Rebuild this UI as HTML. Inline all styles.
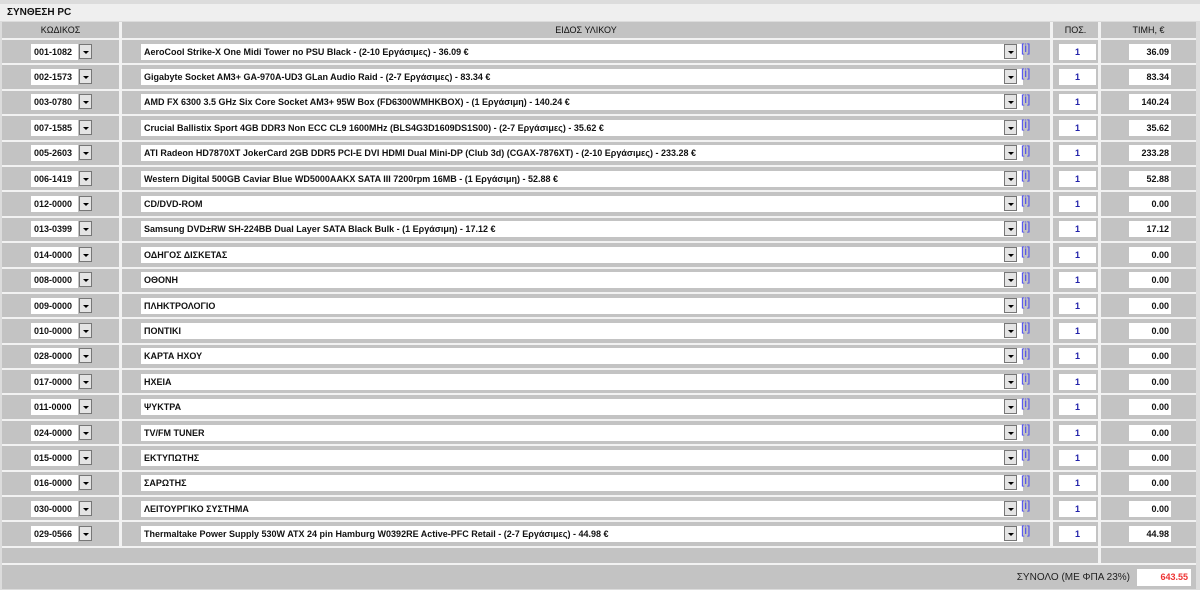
<!DOCTYPE html>
<html><head><meta charset="utf-8"><style>
body{margin:0;width:1200px;height:590px;background:#dcdcdc;font-family:"Liberation Sans",Arial,sans-serif;overflow:hidden;position:relative}
.title{position:absolute;left:0;top:4px;width:1200px;height:17px;background:#efefef;font-size:10px;font-weight:bold;line-height:17px;text-indent:7px;color:#111}
.g{position:absolute;left:2px;top:22px;display:grid;grid-template-columns:117px 928px 45px 95px;grid-template-rows:16px repeat(20,23.4px) 15px 24px;gap:2px 3px;background:#f2f2f2;padding:0}
.g>div{background:#c3c3c3;position:relative;font-size:9px;color:#111}
.h{text-align:center;line-height:16px;color:#333;font-size:9px}
.b{position:absolute;top:50%;margin-top:-8px;height:16px;background:#fff;font-size:9px;line-height:16px;font-weight:bold;box-sizing:border-box}
.c{left:29px;width:47px;padding-left:3px}
.d{left:19px;width:882px;padding-left:3px}
.ar{position:absolute;top:50%;margin-top:-8px;width:13px;height:15px;background:#e4e4e4;border:1px solid #777;box-sizing:border-box}
.ar:after{content:"";position:absolute;left:3px;top:6px;border-left:3px solid transparent;border-right:3px solid transparent;border-top:3px solid #000}
.a1{left:77px}.a2{left:882px}
.i{position:absolute;left:899px;top:1px;color:#44e;font-size:12px;font-weight:normal}
.q{left:6px;width:37px;text-align:center;color:#22a}
.p{left:28px;width:42px;text-align:right;padding-right:2px}
.sp{grid-column:1/4}
.tot{grid-column:1/5;text-align:right}
.tl{position:absolute;right:66px;top:7px;font-size:10px;color:#222}
.tb{position:absolute;right:5px;top:4px;width:54px;height:17px;background:#fff;color:#e33;font-weight:bold;font-size:9px;line-height:17px;text-align:right;padding-right:3px;box-sizing:border-box}
</style></head><body>
<div class="title">ΣΥΝΘΕΣΗ PC</div>
<div class="g">
<div class="h">ΚΩΔΙΚΟΣ</div><div class="h">ΕΙΔΟΣ ΥΛΙΚΟΥ</div><div class="h">ΠΟΣ.</div><div class="h">ΤΙΜΗ, €</div>

<div><span class="b c">001-1082</span><span class="ar a1"></span></div><div><span class="b d">AeroCool Strike-X One Midi Tower no PSU Black - (2-10 Εργάσιμες) - 36.09 €</span><span class="ar a2"></span><span class="i">[i]</span></div><div><span class="b q">1</span></div><div><span class="b p">36.09</span></div>
<div><span class="b c">002-1573</span><span class="ar a1"></span></div><div><span class="b d">Gigabyte Socket AM3+ GA-970A-UD3 GLan Audio Raid - (2-7 Εργάσιμες) - 83.34 €</span><span class="ar a2"></span><span class="i">[i]</span></div><div><span class="b q">1</span></div><div><span class="b p">83.34</span></div>
<div><span class="b c">003-0780</span><span class="ar a1"></span></div><div><span class="b d">AMD FX 6300 3.5 GHz Six Core Socket AM3+ 95W Box (FD6300WMHKBOX) - (1 Εργάσιμη) - 140.24 €</span><span class="ar a2"></span><span class="i">[i]</span></div><div><span class="b q">1</span></div><div><span class="b p">140.24</span></div>
<div><span class="b c">007-1585</span><span class="ar a1"></span></div><div><span class="b d">Crucial Ballistix Sport 4GB DDR3 Non ECC CL9 1600MHz (BLS4G3D1609DS1S00) - (2-7 Εργάσιμες) - 35.62 €</span><span class="ar a2"></span><span class="i">[i]</span></div><div><span class="b q">1</span></div><div><span class="b p">35.62</span></div>
<div><span class="b c">005-2603</span><span class="ar a1"></span></div><div><span class="b d">ATI Radeon HD7870XT JokerCard 2GB DDR5 PCI-E DVI HDMI Dual Mini-DP (Club 3d) (CGAX-7876XT) - (2-10 Εργάσιμες) - 233.28 €</span><span class="ar a2"></span><span class="i">[i]</span></div><div><span class="b q">1</span></div><div><span class="b p">233.28</span></div>
<div><span class="b c">006-1419</span><span class="ar a1"></span></div><div><span class="b d">Western Digital 500GB Caviar Blue WD5000AAKX SATA III 7200rpm 16MB - (1 Εργάσιμη) - 52.88 €</span><span class="ar a2"></span><span class="i">[i]</span></div><div><span class="b q">1</span></div><div><span class="b p">52.88</span></div>
<div><span class="b c">012-0000</span><span class="ar a1"></span></div><div><span class="b d">CD/DVD-ROM</span><span class="ar a2"></span><span class="i">[i]</span></div><div><span class="b q">1</span></div><div><span class="b p">0.00</span></div>
<div><span class="b c">013-0399</span><span class="ar a1"></span></div><div><span class="b d">Samsung DVD±RW SH-224BB Dual Layer SATA Black Bulk - (1 Εργάσιμη) - 17.12 €</span><span class="ar a2"></span><span class="i">[i]</span></div><div><span class="b q">1</span></div><div><span class="b p">17.12</span></div>
<div><span class="b c">014-0000</span><span class="ar a1"></span></div><div><span class="b d">ΟΔΗΓΟΣ ΔΙΣΚΕΤΑΣ</span><span class="ar a2"></span><span class="i">[i]</span></div><div><span class="b q">1</span></div><div><span class="b p">0.00</span></div>
<div><span class="b c">008-0000</span><span class="ar a1"></span></div><div><span class="b d">ΟΘΟΝΗ</span><span class="ar a2"></span><span class="i">[i]</span></div><div><span class="b q">1</span></div><div><span class="b p">0.00</span></div>
<div><span class="b c">009-0000</span><span class="ar a1"></span></div><div><span class="b d">ΠΛΗΚΤΡΟΛΟΓΙΟ</span><span class="ar a2"></span><span class="i">[i]</span></div><div><span class="b q">1</span></div><div><span class="b p">0.00</span></div>
<div><span class="b c">010-0000</span><span class="ar a1"></span></div><div><span class="b d">ΠΟΝΤΙΚΙ</span><span class="ar a2"></span><span class="i">[i]</span></div><div><span class="b q">1</span></div><div><span class="b p">0.00</span></div>
<div><span class="b c">028-0000</span><span class="ar a1"></span></div><div><span class="b d">ΚΑΡΤΑ ΗΧΟΥ</span><span class="ar a2"></span><span class="i">[i]</span></div><div><span class="b q">1</span></div><div><span class="b p">0.00</span></div>
<div><span class="b c">017-0000</span><span class="ar a1"></span></div><div><span class="b d">ΗΧΕΙΑ</span><span class="ar a2"></span><span class="i">[i]</span></div><div><span class="b q">1</span></div><div><span class="b p">0.00</span></div>
<div><span class="b c">011-0000</span><span class="ar a1"></span></div><div><span class="b d">ΨΥΚΤΡΑ</span><span class="ar a2"></span><span class="i">[i]</span></div><div><span class="b q">1</span></div><div><span class="b p">0.00</span></div>
<div><span class="b c">024-0000</span><span class="ar a1"></span></div><div><span class="b d">TV/FM TUNER</span><span class="ar a2"></span><span class="i">[i]</span></div><div><span class="b q">1</span></div><div><span class="b p">0.00</span></div>
<div><span class="b c">015-0000</span><span class="ar a1"></span></div><div><span class="b d">ΕΚΤΥΠΩΤΗΣ</span><span class="ar a2"></span><span class="i">[i]</span></div><div><span class="b q">1</span></div><div><span class="b p">0.00</span></div>
<div><span class="b c">016-0000</span><span class="ar a1"></span></div><div><span class="b d">ΣΑΡΩΤΗΣ</span><span class="ar a2"></span><span class="i">[i]</span></div><div><span class="b q">1</span></div><div><span class="b p">0.00</span></div>
<div><span class="b c">030-0000</span><span class="ar a1"></span></div><div><span class="b d">ΛΕΙΤΟΥΡΓΙΚΟ ΣΥΣΤΗΜΑ</span><span class="ar a2"></span><span class="i">[i]</span></div><div><span class="b q">1</span></div><div><span class="b p">0.00</span></div>
<div><span class="b c">029-0566</span><span class="ar a1"></span></div><div><span class="b d">Thermaltake Power Supply 530W ATX 24 pin Hamburg W0392RE Active-PFC Retail - (2-7 Εργάσιμες) - 44.98 €</span><span class="ar a2"></span><span class="i">[i]</span></div><div><span class="b q">1</span></div><div><span class="b p">44.98</span></div>

<div class="sp"></div><div></div>
<div class="tot"><span class="tl">ΣΥΝΟΛΟ (ΜΕ ΦΠΑ 23%)</span><span class="tb">643.55</span></div>
</div>
</body></html>
